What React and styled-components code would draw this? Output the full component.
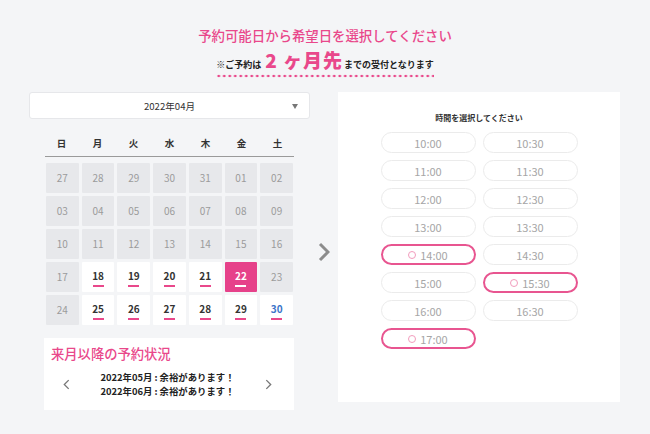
import React from "react";
import styled, { createGlobalStyle } from "styled-components";

const PINK = "#e9488b";

const GlobalStyle = createGlobalStyle`
    body {
        margin: 0;
        background: #f4f5f7;
        font-family: "Noto Sans CJK JP", "Noto Sans", sans-serif;
        color: #333;
    }
`;

const days = [
    [27, 28, 29, 30, 31, 1, 2],
    [3, 4, 5, 6, 7, 8, 9],
    [10, 11, 12, 13, 14, 15, 16],
    [17, 18, 19, 20, 21, 22, 23],
    [24, 25, 26, 27, 28, 29, 30],
];

const openDays = [18, 19, 20, 21, 22, 25, 26, 27, 28, 29, 30];

const times = [
    ["10:00", false], ["10:30", false],
    ["11:00", false], ["11:30", false],
    ["12:00", false], ["12:30", false],
    ["13:00", false], ["13:30", false],
    ["14:00", true], ["14:30", false],
    ["15:00", false], ["15:30", true],
    ["16:00", false], ["16:30", false],
    ["17:00", true],
];

function App() {
    return (
        <Page>
            <GlobalStyle />
            <Title>予約可能日から希望日を選択してください</Title>
            <Notice>
                <span>※ご予約は</span>
                <strong>2 ヶ月先</strong>
                <span>までの受付となります</span>
            </Notice>
            <Main>
                <LeftColumn>
                    <MonthSelect>
                        2022年04月
                        <Caret />
                    </MonthSelect>
                    <Calendar>
                        <WeekHeader>
                            {["日", "月", "火", "水", "木", "金", "土"].map((w) => (
                                <span key={w}>{w}</span>
                            ))}
                        </WeekHeader>
                        <DayGrid>
                            {days.flat().map((d, i) => {
                                const row = Math.floor(i / 7);
                                const open = row >= 3 && openDays.includes(d);
                                const state = !open ? "off" : d === 22 ? "selected" : "open";
                                return (
                                    <DayCell key={i} $state={state} $blue={open && d === 30}>
                                        <span>{String(d).padStart(2, "0")}</span>
                                        {open && <Mark />}
                                    </DayCell>
                                );
                            })}
                        </DayGrid>
                        <StatusCard>
                            <CardTitle>来月以降の予約状況</CardTitle>
                            <StatusRow>
                                <Chevron viewBox="0 0 8 12">
                                    <path d="M6.5 1 L1.5 6 L6.5 11" />
                                </Chevron>
                                <StatusText>
                                    <p>2022年05月 : 余裕があります！</p>
                                    <p>2022年06月 : 余裕があります！</p>
                                </StatusText>
                                <Chevron viewBox="0 0 8 12">
                                    <path d="M1.5 1 L6.5 6 L1.5 11" />
                                </Chevron>
                            </StatusRow>
                        </StatusCard>
                    </Calendar>
                </LeftColumn>
                <ArrowCol>
                    <svg width="12" height="20" viewBox="0 0 12 20">
                        <path d="M2 2 L10 10 L2 18" fill="none" stroke="#8c8c8c" strokeWidth="3" />
                    </svg>
                </ArrowCol>
                <TimePanel>
                    <PanelTitle>時間を選択してください</PanelTitle>
                    <TimeGrid>
                        {times.map(([t, ok]) => (
                            <TimeButton key={t} $ok={ok}>
                                {ok && <Ring />}
                                {t}
                            </TimeButton>
                        ))}
                    </TimeGrid>
                </TimePanel>
            </Main>
        </Page>
    );
}

export default App;

const Page = styled.div`
    width: 650px;
    height: 434px;
    padding-top: 25px;
    box-sizing: border-box;
    display: flex;
    flex-direction: column;
    align-items: center;
`;

const Title = styled.h1`
    margin: 0;
    font-size: 13.4px;
    line-height: 20px;
    font-weight: 500;
    color: ${PINK};
`;

const Notice = styled.div`
    margin-top: 3px;
    display: flex;
    align-items: baseline;
    font-size: 9px;
    font-weight: 700;
    color: #222;
    padding-bottom: 6px;
    background-image: radial-gradient(circle, ${PINK} 1.25px, transparent 1.6px);
    background-size: 5.5px 4px;
    background-repeat: repeat-x;
    background-position: 0 100%;

    strong {
        font-size: 19px;
        line-height: 24px;
        color: ${PINK};
        margin: 0 1px 0 4px;
        letter-spacing: 1px;
    }
`;

const Main = styled.div`
    margin-top: 14px;
    width: 650px;
    display: flex;
    align-items: flex-start;
    padding-left: 29px;
    box-sizing: border-box;
`;

const LeftColumn = styled.div`
    width: 281px;
`;

const MonthSelect = styled.div`
    position: relative;
    height: 27px;
    background: #fff;
    border: 1px solid #e6e7ea;
    border-radius: 3px;
    box-sizing: border-box;
    display: flex;
    align-items: center;
    justify-content: center;
    font-size: 9.6px;
    color: #333;
`;

const Caret = styled.span`
    position: absolute;
    right: 11px;
    top: 11px;
    width: 0;
    height: 0;
    border-left: 3.5px solid transparent;
    border-right: 3.5px solid transparent;
    border-top: 5px solid #777;
`;

const Calendar = styled.div`
    padding: 0 17px 0 17px;
`;

const WeekHeader = styled.div`
    margin-top: 15px;
    display: grid;
    grid-template-columns: repeat(7, 1fr);
    column-gap: 3px;
    height: 22px;
    margin-left: -1px;
    margin-right: -1px;
    border-bottom: 1px solid #9a9a9a;
    font-size: 9.5px;
    font-weight: 700;
    color: #333;

    span {
        text-align: center;
        line-height: 18px;
    }
`;

const DayGrid = styled.div`
    margin-top: 6px;
    display: grid;
    grid-template-columns: repeat(7, 1fr);
    grid-auto-rows: 30px;
    gap: 3px 3px;
`;

const Mark = styled.i`
    display: block;
    width: 11px;
    height: 2px;
    margin-top: 3px;
    background: ${PINK};
`;

const DayCell = styled.div`
    display: flex;
    flex-direction: column;
    align-items: center;
    justify-content: center;
    font-size: 10px;
    background: ${(p) =>
        p.$state === "off" ? "#e7e8eb" : p.$state === "selected" ? "#e6418a" : "#fff"};
    color: ${(p) =>
        p.$state === "off"
            ? "#9b9b9b"
            : p.$state === "selected"
            ? "#fff"
            : p.$blue
            ? "#3b74c9"
            : "#333"};
    font-weight: ${(p) => (p.$state === "off" ? 400 : 700)};
    border-radius: 1px;

    span {
        line-height: 12px;
        margin-top: ${(p) => (p.$state === "off" ? "0" : "2px")};
    }

    ${Mark} {
        background: ${(p) => (p.$state === "selected" ? "#fff" : PINK)};
    }
`;

const StatusCard = styled.div`
    margin-top: 13px;
    background: #fff;
    height: 72px;
    box-sizing: border-box;
    padding: 7px 6px 0 7px;
    margin-left: -2px;
    margin-right: -1px;
`;

const CardTitle = styled.h2`
    margin: 0;
    font-size: 13.3px;
    line-height: 18px;
    font-weight: 500;
    color: ${PINK};
`;

const StatusRow = styled.div`
    margin-top: 7px;
    display: flex;
    align-items: center;
    justify-content: space-between;
    padding: 0 16px 0 12px;
`;

const Chevron = styled.svg`
    width: 7px;
    height: 11px;
    fill: none;
    stroke: #777;
    stroke-width: 1.5;
`;

const StatusText = styled.div`
    text-align: center;
    font-size: 9.4px;
    font-weight: 700;
    color: #222;

    p {
        margin: 0;
        line-height: 14px;
    }
`;

const ArrowCol = styled.div`
    width: 28px;
    align-self: center;
    display: flex;
    justify-content: center;
    margin-top: 2px;
`;

const TimePanel = styled.div`
    width: 282px;
    height: 310px;
    background: #fff;
    display: flex;
    flex-direction: column;
    align-items: center;
`;

const PanelTitle = styled.div`
    margin-top: 20px;
    font-size: 8px;
    line-height: 12px;
    font-weight: 700;
    color: #333;
`;

const TimeGrid = styled.div`
    margin-top: 8px;
    display: grid;
    grid-template-columns: 95px 95px;
    grid-auto-rows: 21px;
    gap: 7px 7px;
`;

const TimeButton = styled.div`
    display: flex;
    align-items: center;
    justify-content: center;
    gap: 4px;
    border-radius: 11px;
    box-sizing: border-box;
    border: ${(p) => (p.$ok ? `2px solid #e85590` : "1.5px solid #ebebeb")};
    font-size: 11px;
    color: #a6a6a6;
`;

const Ring = styled.i`
    width: 6px;
    height: 6px;
    border: 1.2px solid #f29cbd;
    border-radius: 50%;
`;
